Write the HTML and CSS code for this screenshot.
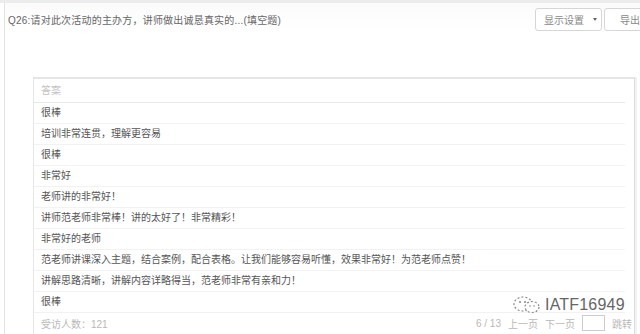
FILE: index.html
```html
<!DOCTYPE html>
<html lang="zh-CN">
<head>
    <meta charset="UTF-8">
    <title>填空题答案</title>
    <link rel="stylesheet" href="styles.css">
</head>
<body>
<div class="page">
    <!--题目和工具按钮-->
    <div class="head">
        <div class="q_title">Q26:请对此次活动的主办方，讲师做出诚恳真实的...(填空题)</div>
        <div class="tools">
            <span class="btn btn_set">显示设置<i class="caret"></i></span>
            <span class="btn btn_export">导出</span>
        </div>
    </div>
    <!--答案列表-->
    <div class="answer_box">
        <div class="answer_list">
            <div class="answer_head">答案</div>
            <div class="answer_row">很棒</div>
            <div class="answer_row">培训非常连贯，理解更容易</div>
            <div class="answer_row">很棒</div>
            <div class="answer_row">非常好</div>
            <div class="answer_row">老师讲的非常好！</div>
            <div class="answer_row">讲师范老师非常棒！讲的太好了！非常精彩！</div>
            <div class="answer_row">非常好的老师</div>
            <div class="answer_row">范老师讲课深入主题，结合案例，配合表格。让我们能够容易听懂，效果非常好！为范老师点赞！</div>
            <div class="answer_row">讲解思路清晰，讲解内容详略得当，范老师非常有亲和力！</div>
            <div class="answer_row">很棒</div>
        </div>
        <!--底部分页-->
        <div class="answer_foot">
            <span class="count">受访人数：121</span>
            <div class="pager">
                <span>6 / 13</span>
                <span>上一页</span>
                <span>下一页</span>
                <span class="jump_input"></span>
                <span>跳转</span>
            </div>
        </div>
        <!--水印-->
        <div class="watermark">
            <svg width="34" height="20" viewBox="0 0 34 20">
                <ellipse cx="12" cy="9" rx="9" ry="7" fill="none" stroke="#8a8a8a" stroke-width="1.2" stroke-dasharray="2 2"/>
                <ellipse cx="21" cy="12" rx="7" ry="5.5" fill="#fff" stroke="#8a8a8a" stroke-width="1.2" stroke-dasharray="2 2"/>
                <circle cx="9" cy="7" r="1" fill="#8a8a8a"/>
                <circle cx="14" cy="7" r="1" fill="#8a8a8a"/>
                <circle cx="19" cy="11" r="0.8" fill="#8a8a8a"/>
                <circle cx="23" cy="11" r="0.8" fill="#8a8a8a"/>
            </svg>
            <span class="wm_text">IATF16949</span>
        </div>
    </div>
</div>
</body>
</html>
```

FILE: styles.css
```css
*{
    margin: 0;
    padding: 0;
    box-sizing: border-box;
}
html,body
{
    overflow: hidden;
    background: #fff;
}
body
{
    border-top: 3px solid #ececec;
    font-family: "Liberation Sans", "Noto Sans CJK SC", sans-serif;
    font-size: 10px;
    color: #555;
}
.page
{
    width: 660px;
    height: 331px;
    margin-left: 4px;
    border-left: 1px solid #e2e2e2;
}
.head
{
    display: flex;
    align-items: center;
    justify-content: space-between;
    height: 28px;
    padding: 5px 0 0 3px;
    background: linear-gradient(#fbfbfb, #fff);
}
.q_title
{
    color: #666;
    font-size: 10px;
    letter-spacing: 0.2px;
}
.tools
{
    display: flex;
    gap: 2px;
}
.btn
{
    display: flex;
    align-items: center;
    height: 23px;
    border: 1px solid #d6d6d6;
    border-radius: 3px;
    background: #fff;
    color: #888;
    font-size: 10px;
}
.btn_set
{
    width: 67px;
    padding-left: 8px;
}
.caret
{
    width: 0;
    height: 0;
    margin-left: 9px;
    border-left: 2.5px solid transparent;
    border-right: 2.5px solid transparent;
    border-top: 3px solid #666;
}
.btn_export
{
    width: 60px;
    padding-left: 15px;
}
.answer_box
{
    position: relative;
    width: 602px;
    margin: 46px 0 0 28px;
    border-top: 2px solid #e6e6e6;
    border-left: 1px solid #e6e6e6;
    border-right: 1px solid #dcdcdc;
    box-shadow: 2px 0 0 #f2f2f2;
    height: 260px;
}
.answer_list
{
    width: 591px;
}
.answer_head
{
    height: 24px;
    line-height: 23px;
    padding-left: 7px;
    color: #c2c2c2;
    border-bottom: 1px solid #e8e8e8;
}
.answer_row
{
    height: 21px;
    line-height: 20px;
    padding-left: 7px;
    color: #555;
    border-bottom: 1px solid #f2f2f2;
    white-space: nowrap;
}
.answer_foot
{
    display: flex;
    align-items: center;
    justify-content: space-between;
    height: 18px;
    margin-top: 1px;
    padding: 0 2px 0 7px;
    color: #b8b8b8;
}
.pager
{
    display: flex;
    align-items: center;
    gap: 7px;
}
.jump_input
{
    width: 23px;
    height: 16px;
    border: 1px solid #ccc;
    background: #fff;
}
.watermark
{
    position: absolute;
    left: 477px;
    top: 216px;
    display: flex;
    align-items: center;
}
.wm_text
{
    font-family: "Liberation Sans", sans-serif;
    font-size: 16px;
    color: #666;
    letter-spacing: 0.2px;
    text-shadow: 1px 0 0 #fff, -1px 0 0 #fff, 0 1px 0 #fff, 0 -1px 0 #fff;
}
```
